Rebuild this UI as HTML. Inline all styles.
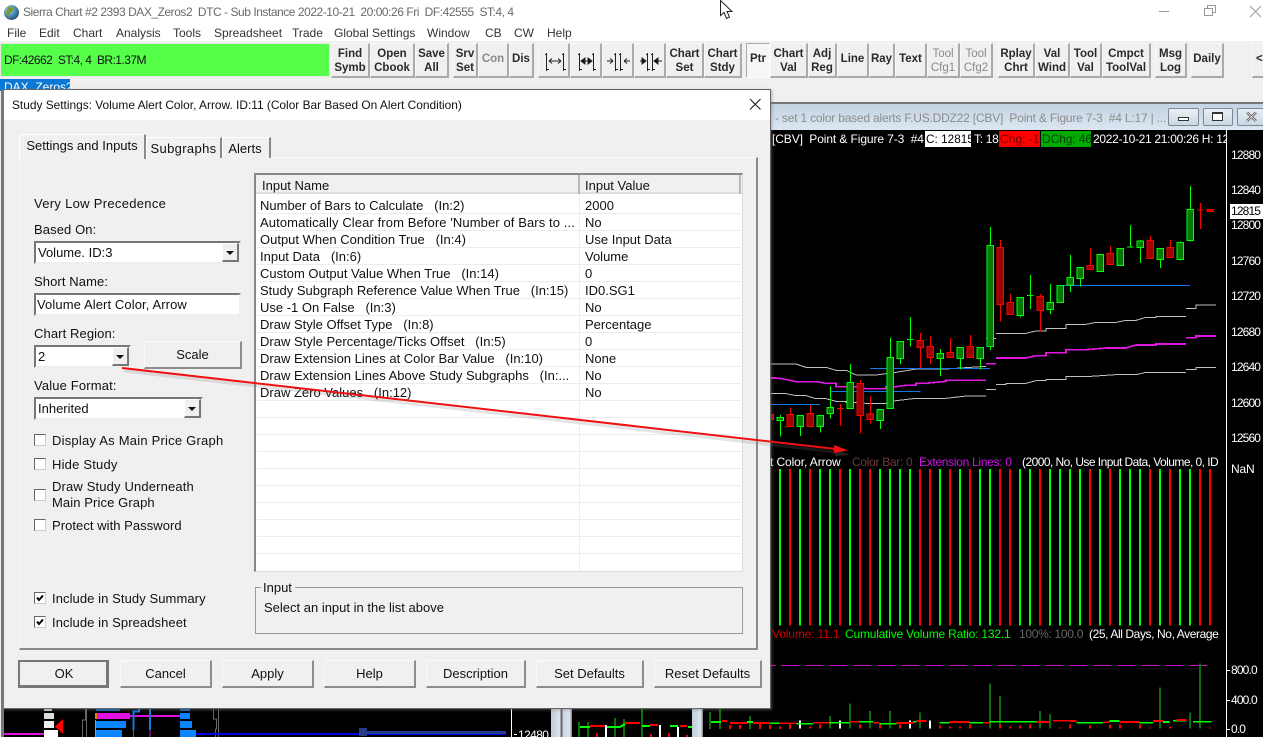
<!DOCTYPE html>
<html><head><meta charset="utf-8"><title>Sierra Chart</title>
<style>
*{box-sizing:border-box}
html,body{margin:0;padding:0;width:1263px;height:737px;overflow:hidden;background:#f0f0f0}
body{position:relative;font-family:"Liberation Sans",sans-serif;font-size:13px;color:#111}
.a{position:absolute}
.t{position:absolute;white-space:pre;line-height:16px;height:16px}
.b{position:absolute;top:43px;height:35px;background:#f0f0f0;border:1px solid #f8f8f8;border-right:2px solid #aaa;border-bottom:2px solid #aaa;text-align:center;font-size:11.5px;font-weight:bold;line-height:14px;color:#2a2a2a;padding-top:3px;white-space:pre;overflow:hidden}
.b.s{line-height:31px;padding-top:0}
.b.d{color:#8a8a8a;font-weight:normal}
.m{position:absolute;top:25px;line-height:16px;font-size:12px;color:#333;white-space:pre}
.dlgb{position:absolute;top:660px;height:28px;background:#f0f0f0;border:1px solid #fafafa;border-right:2px solid #8c8c8c;border-bottom:2px solid #8c8c8c;text-align:center;line-height:26px;font-size:13px;color:#111}
.combo{position:absolute;background:#fff;border:2px solid #777;border-right-color:#eee;border-bottom-color:#eee;line-height:20px;padding-left:2px;font-size:13px;white-space:pre}
.arr{position:absolute;right:0;top:0;bottom:0;width:17px;background:#f0f0f0;border-left:1px solid #fff;border-top:1px solid #fff;border-right:2px solid #777;border-bottom:2px solid #777}
.arr:after{content:"";position:absolute;left:3px;top:7px;border-left:4px solid transparent;border-right:4px solid transparent;border-top:4px solid #111}
.cb{position:absolute;left:34px;width:12px;height:12px;background:#fff;border:1px solid #777;border-top-color:#666;border-left-color:#666;border-right-color:#ccc;border-bottom-color:#ccc}
.tab{position:absolute;background:#f0f0f0;border:1px solid #fff;border-right:2px solid #888;border-bottom:0;text-align:center;font-size:13px}
.r{position:absolute;left:260px;white-space:pre;line-height:16px;font-size:13px}
.v{position:absolute;left:585px;white-space:pre;line-height:16px;font-size:13px}
.hl{position:absolute;left:257px;width:484px;height:1px;background:#ececec}
.c{position:absolute;white-space:pre;line-height:16px;font-size:12px;color:#fff}
.n{position:absolute;white-space:pre;line-height:16px;font-size:12px;color:#fff;left:1231px;letter-spacing:-.85px}
svg{position:absolute;overflow:visible}
</style></head><body>

<!-- top white -->
<div class="a" style="left:0;top:0;width:1263px;height:41px;background:#fff"></div>
<svg style="left:3px;top:4px" width="17" height="17" viewBox="0 0 17 17"><defs><radialGradient id="gl" cx=".35" cy=".3" r=".8"><stop offset="0" stop-color="#cfe6f7"/><stop offset=".5" stop-color="#4f8fb8"/><stop offset="1" stop-color="#1d4566"/></radialGradient></defs><circle cx="8.500" cy="8.500" r="7.500" fill="url(#gl)"/><path d="M5 3q4-1 6 1l-1 3-3 2-1 4-2-2-1-3z" fill="#7a9a3a"/></svg>
<div class="t" style="left:23px;top:4px;font-size:12px;letter-spacing:-.46px;color:#6a6a6a">Sierra Chart #2 2393 DAX_Zeros2  DTC - Sub Instance 2022-10-21  20:00:26 Fri  DF:42555  ST:4, 4</div>
<div class="m" style="left:7px">File</div><div class="m" style="left:39px">Edit</div><div class="m" style="left:73px">Chart</div><div class="m" style="left:116px">Analysis</div><div class="m" style="left:173px">Tools</div><div class="m" style="left:214px">Spreadsheet</div><div class="m" style="left:292px">Trade</div><div class="m" style="left:334px">Global Settings</div><div class="m" style="left:427px">Window</div><div class="m" style="left:485px">CB</div><div class="m" style="left:514px">CW</div><div class="m" style="left:547px">Help</div>

<!-- window controls -->
<svg style="left:1150px;top:0" width="113" height="24"><path d="M9 11.500H19" stroke="#999" fill="none"/><path d="M54.500 8.500H62.500V15.500H54.500ZM57.500 8.500V5.500H65.500V12.500H62.500" stroke="#999" fill="none"/><path d="M100 6L111 17M111 6L100 17" stroke="#999" fill="none"/></svg>
<svg style="left:720px;top:0" width="16" height="20"><path d="M.5 .5V15.500L4 12.500L6.500 18.500L9.500 17L7 11.500H12Z" fill="#fff" stroke="#222"/></svg>

<!-- toolbar -->
<div class="a" style="left:0;top:43px;width:330px;height:34px;background:#55ff4a;border:1px solid #e8e8e8"></div>
<div class="t" style="left:4px;top:52px;font-size:12px;letter-spacing:-.55px;color:#111">DF:42662  ST:4, 4  BR:1.37M</div>
<div class="b" style="left:331px;width:39px">Find
Symb</div>
<div class="b" style="left:370px;width:45px">Open
Cbook</div>
<div class="b" style="left:415px;width:34px">Save
All</div>
<div class="b" style="left:453px;width:25px">Srv
Set</div>
<div class="b s d" style="left:478px;width:31px;font-weight:bold">Con</div>
<div class="b s" style="left:509px;width:25px">Dis</div>
<div class="b" style="left:538px;width:32px"></div>
<div class="b" style="left:570px;width:32px"></div>
<div class="b" style="left:602px;width:32px"></div>
<div class="b" style="left:634px;width:32px"></div>
<svg style="left:538px;top:43px" width="128" height="35" fill="none" stroke="#222">
<path d="M8.500 10V28M7 11.500H8M9 26.500H11M25.500 10V28M24 11.500H25M26 26.500H28M11 18H23M11 18l3-2.500M11 18l3 2.500M23 18l-3-2.500M23 18l-3 2.500"/>
<path d="M41.500 10V28M40 11.500H41M42 26.500H44M55.500 10V28M54 11.500H55M56 26.500H58M44 18H53"/><path d="M43 18l4-3V21ZM54 18l-4-3V21Z" fill="#111"/>
<path d="M77.500 10V28M76 11.500H77M78 26.500H80M82.500 10V28M81 11.500H82M83 26.500H85M69 18H75M75 18l-3-2.500M75 18l-3 2.500M86 18H92M86 18l3-2.500M86 18l3 2.500"/>
<path d="M109.500 10V28M108 11.500H109M110 26.500H112M114.500 10V28M113 11.500H114M115 26.500H117M102 18H105M120 18H124"/><path d="M108 18l-4-3V21ZM116 18l4-3V21Z" fill="#111"/>
</svg>
<div class="b" style="left:666px;width:38px">Chart
Set</div>
<div class="b" style="left:704px;width:38px">Chart
Stdy</div>
<div class="b s" style="left:746px;width:24px;background:#f6f6f6;border:1px solid #aaa;border-right-color:#fff;border-bottom-color:#fff">Ptr</div>
<div class="b" style="left:770px;width:38px">Chart
Val</div>
<div class="b" style="left:808px;width:29px">Adj
Reg</div>
<div class="b s" style="left:837px;width:32px">Line</div>
<div class="b s" style="left:869px;width:26px">Ray</div>
<div class="b s" style="left:895px;width:32px">Text</div>
<div class="b d" style="left:927px;width:33px">Tool
Cfg1</div>
<div class="b d" style="left:960px;width:33px">Tool
Cfg2</div>
<div class="b" style="left:998px;width:37px">Rplay
Chrt</div>
<div class="b" style="left:1035px;width:35px">Val
Wind</div>
<div class="b" style="left:1070px;width:32px">Tool
Val</div>
<div class="b" style="left:1102px;width:49px">Cmpct
ToolVal</div>
<div class="b" style="left:1155px;width:32px">Msg
Log</div>
<div class="b s" style="left:1191px;width:33px">Daily</div>
<div class="b s" style="left:1252px;width:20px;text-align:left;padding-left:3px;border-right:0">&lt;</div>

<!-- chart tab behind dialog -->
<div class="a" style="left:0;top:79px;width:70px;height:12px;background:#0a78d4;color:#fff;font-size:12px;padding-left:4px;line-height:17px;overflow:hidden">DAX_Zeros2</div>

<!-- chart window title -->
<div class="a" style="left:770px;top:102px;width:493px;height:28px;background:linear-gradient(#c4d2e2,#dbe6f1);border-top:2px solid #777"></div>
<div class="t" style="left:775px;top:110px;font-size:12px;letter-spacing:-.2px;color:#8c8c8c">- set 1 color based alerts F.US.DDZ22 [CBV]  Point &amp; Figure 7-3  #4 L:17 | ...</div>
<div class="a" style="left:1168px;top:108px;width:31px;height:18px;background:linear-gradient(#e9eff6,#ccd7e3);border:1px solid #7d8896;border-radius:2px"></div>
<div class="a" style="left:1178px;top:117px;width:11px;height:4px;border:1px solid #333;background:#fff"></div>
<div class="a" style="left:1203px;top:108px;width:30px;height:18px;background:linear-gradient(#e9eff6,#ccd7e3);border:1px solid #7d8896;border-radius:2px"></div>
<div class="a" style="left:1212px;top:112px;width:11px;height:9px;border:1px solid #333;border-top-width:2px;background:#fff"></div>
<div class="a" style="left:1237px;top:108px;width:30px;height:18px;background:linear-gradient(#e9eff6,#ccd7e3);border:1px solid #7d8896;border-radius:2px"></div>
<svg style="left:1245px;top:111px" width="14" height="12"><path d="M2 1.500L11 10M11 1.500L2 10" stroke="#555" stroke-width="2.500" fill="none"/><path d="M2 1.500L11 10M11 1.500L2 10" stroke="#fff" stroke-width=".8" fill="none"/></svg>

<!-- black chart regions -->
<div class="a" style="left:770px;top:130px;width:493px;height:607px;background:#000"></div>
<div class="a" style="left:1226px;top:130px;width:1px;height:607px;background:#fff"></div>
<div class="a" style="left:1px;top:705px;width:3px;height:32px;background:#777"></div>
<div class="a" style="left:4px;top:705px;width:547px;height:32px;background:#000"></div>
<div class="a" style="left:551px;top:705px;width:21px;height:32px;background:linear-gradient(90deg,#c0ccd8,#dde6ee 45%,#666 45%,#666 54%,#c8d4e0 54%,#dde6ee 92%,#999 92%)"></div>
<div class="a" style="left:572px;top:705px;width:120px;height:32px;background:#000"></div>
<div class="a" style="left:692px;top:705px;width:11px;height:32px;background:linear-gradient(90deg,#c0ccd8,#dde6ee 85%,#999 85%)"></div>
<div class="a" style="left:703px;top:705px;width:67px;height:32px;background:#000"></div>

<!-- chart header -->
<div class="a" style="left:925px;top:131px;width:46px;height:16px;background:#fff"></div>
<div class="a" style="left:999px;top:131px;width:41px;height:16px;background:#f00"></div>
<div class="a" style="left:1041px;top:131px;width:50px;height:16px;background:#0a0"></div>
<div class="c" style="left:772px;top:131px;letter-spacing:-.1px">[CBV]  Point &amp; Figure 7-3  #4</div>
<div class="c" style="left:926px;top:131px;color:#000;font-size:11.800px">C: 12815</div>
<div class="c" style="left:974px;top:131px;letter-spacing:-.3px">T: 18</div>
<div class="c" style="left:1000px;top:131px;color:#700">Chg: -1</div>
<div class="c" style="left:1042px;top:131px;color:#040;letter-spacing:-.1px">DChg: 46</div>
<div class="c" style="left:1093px;top:131px;width:133px;overflow:hidden;letter-spacing:-.3px">2022-10-21 21:00:26 H: 12</div>

<!-- axis labels -->
<div class="n" style="top:147px">12880</div>
<div class="n" style="top:182px">12840</div>
<div class="n" style="top:217px">12800</div>
<div class="a" style="left:1230px;top:204px;width:33px;height:15px;background:#fff"></div>
<div class="n" style="top:203px;color:#000">12815</div>
<div class="n" style="top:253px">12760</div>
<div class="n" style="top:288px">12720</div>
<div class="n" style="top:324px">12680</div>
<div class="n" style="top:359px">12640</div>
<div class="n" style="top:395px">12600</div>
<div class="n" style="top:430px">12560</div>
<div class="c" style="left:1231px;top:461px;letter-spacing:-.2px">NaN</div>
<div class="n" style="top:662px">800.0</div>
<div class="n" style="top:692px">400.0</div>
<div class="n" style="top:721px">0.0</div>
<svg style="left:1226px;top:660px" width="6" height="75"><path d="M0 10.500H4M0 40.500H4M0 69.500H4" stroke="#fff" fill="none"/></svg>

<!-- price chart -->
<svg style="left:0;top:0" width="1263" height="737">
<g transform="translate(770,130) scale(.33333)" fill="none" shape-rendering="crispEdges">
<g stroke="#c0c0c0" stroke-width="3">
<path d="M0 702H78L108 712H168L198 721H228L258 735H318L378 727L408 722L438 717H528L648 709M648 625H678M678 610H768L798 603H828V595H888V583H948L978 577H1038L1068 571H1098L1128 562H1158V559H1248M1248 535H1278V525H1338"/>
<path d="M0 791H48L78 797H108L138 806H168L198 814H228V818H258L288 820H348L378 812L438 805H528L588 798H648M648 778H678M678 763H708V760H768L798 752H828V748H888V740H948L1038 734H1098L1128 727H1248M1248 718H1278V712H1338"/>
</g>
<g stroke="#e018e0" stroke-width="5">
<path d="M0 744H18L48 748L78 755H138L168 760H198V770H258L288 776H348V770H378L408 766H438V760H468L528 754V751H648M648 701H678M678 684H768L798 677H828V668H888V659H948L1008 654H1068L1098 645H1158V642H1248M1248 623H1278V618H1338"/>
</g>
<path d="M0 823H150M180 785H450V787M300 715H660M870 466H1260" stroke="#1478e6" stroke-width="3"/>
<path stroke="#0f0" stroke-width="3" d="M31 855V920M91 855V918M151 855V908M181 768V866M241 702V836M331 838V897M361 622V836M391 634V702M421 561V650M511 657V738M571 652V719M631 652V719M661 291V660M751 502V563M781 435V537M841 462V552M871 466V518M901 375V486M931 412V470M991 373V425M1051 355V407M1081 285V353M1111 330V399M1171 355V414M1231 335V392M1261 168V335M411 629H431M771 497H791M1071 351H1091"/>
<path stroke="#f00" stroke-width="3" d="M61 832V890M121 825V890M211 822V888M271 750V910M301 800V880M451 609V714M481 618V702M541 624V683M601 615V683M691 330V575M721 492V554M811 492V605M961 354V419M1021 348V404M1141 318V386M1201 330V383M1291 219V297M201 836H221M1281 240H1301"/>
<path fill="#007a00" stroke="#0f0" stroke-width="3" d="M21 862H41V872H21ZM81 856H101V890H81ZM141 856H161V890H141ZM171 832H191V851H171ZM231 757H251V836H231ZM321 838H341V872H321ZM351 682H371V836H351ZM381 634H401V686H381ZM501 670H521V686H501ZM561 652H581V686H561ZM621 652H641V686H621ZM651 346H671V650H651ZM741 502H761V557H741ZM831 517H851V539H831ZM861 466H881V518H861ZM891 442H911V465H891ZM921 412H941V445H921ZM981 373H1001V425H981ZM1041 355H1061V407H1041ZM1101 333H1121V353H1101ZM1161 355H1181V388H1161ZM1221 337H1241V389H1221ZM1251 238H1271V332H1251Z"/>
<path fill="#a00000" stroke="#f00" stroke-width="3" d="M-9 853H11V869H-9ZM51 853H71V890H51ZM111 850H131V890H111ZM261 760H281V857H261ZM291 852H311V869H291ZM441 631H461V652H441ZM471 649H491V683H471ZM531 667H551V683H531ZM591 649H611V683H591ZM681 352H701V523H681ZM711 517H731V554H711ZM801 499H821V542H801ZM951 406H971V419H951ZM1011 370H1031V404H1011ZM1131 331H1151V386H1131ZM1191 352H1211V383H1191ZM1311 238H1331V244H1311Z"/>
</g>
<!-- color bars -->
<g transform="translate(769.67,450) scale(.33333)" fill="none" shape-rendering="crispEdges">
<path stroke="#0f0" stroke-width="6" d="M31 57V527M91 57V527M151 57V527M181 57V527M241 57V527M331 57V527M361 57V527M391 57V527M421 57V527M511 57V527M571 57V527M631 57V527M661 57V527M751 57V527M781 57V527M841 57V527M871 57V527M901 57V527M931 57V527M991 57V527M1051 57V527M1081 57V527M1111 57V527M1171 57V527M1231 57V527M1261 57V527"/>
<path stroke="#f00" stroke-width="6" d="M1 57V527M61 57V527M121 57V527M211 57V527M271 57V527M301 57V527M451 57V527M481 57V527M541 57V527M601 57V527M691 57V527M721 57V527M811 57V527M961 57V527M1021 57V527M1141 57V527M1201 57V527M1291 57V527M1321 57V527"/>
<!-- volume -->
<path stroke="#d010d0" stroke-width="3" d="M0 646H18M35 646H90M107 646H162M179 646H234M251 646H306M323 646H378M395 646H450M467 646H522M539 646H594M611 646H666M683 646H738M755 646H810M827 646H882M899 646H954M971 646H1026M1043 646H1098M1115 646H1170M1187 646H1242M1259 646H1314"/>
<path stroke="#0a6e0a" stroke-width="6" d="M181 798V836M241 760V836M301 783V836M361 783V836M451 787V836M661 700V836M691 738V836M811 783V836M841 792V836M1171 712V836M1261 787V836M1291 640V836"/>
<path stroke="#fff" stroke-width="6" d="M91 812V836M211 812V836M421 812V836M481 812V836"/>
<path stroke="#f00" stroke-width="6" d="M31 830V836M61 824V836M121 830V836M151 824V836M271 824V836M331 824V836M391 824V836M511 826V836M541 830V836M571 830V836M601 824V836M691 824V836M721 830V836M751 826V836M781 824V836M871 832V836M901 824V836M961 826V836M1021 824V836M1051 824V836M1111 824V836M1141 832V836M1201 830V836M1321 832V836"/>
<path stroke="#0f0" stroke-width="5" d="M0 820H30M80 821H130M180 818H240M270 815H310M330 821H380M430 815H440M510 818H540M600 818H640M660 815H800M920 818H1000M1020 813H1050M1110 818H1150M1180 816H1200M1210 812H1250M1270 815H1325"/>
<path stroke="#f00" stroke-width="5" d="M30 820H80M130 818H180M240 815H270M310 818H330M380 819H430M440 813H470M540 816H600M640 818H660M800 816H840M850 812H900M900 813H920M1000 817H1020M1050 816H1110M1150 813H1180M1220 810H1250"/>
</g>
</svg>

<!-- legends -->
<div class="c" style="left:770px;top:454px;letter-spacing:-.1px">t Color, Arrow</div>
<div class="c" style="left:852px;top:454px;color:#6b3a3a;letter-spacing:-.3px">Color Bar: 0</div>
<div class="c" style="left:919px;top:454px;color:#d010e8;letter-spacing:-.3px">Extension Lines: 0</div>
<div class="c" style="left:1022px;top:454px;width:204px;overflow:hidden;letter-spacing:-.55px">(2000, No, Use Input Data, Volume, 0, ID</div>
<div class="c" style="left:772px;top:626px;color:#c00;letter-spacing:-.15px">Volume: 11.1</div>
<div class="c" style="left:845px;top:626px;color:#0f0;letter-spacing:-.2px">Cumulative Volume Ratio: 132.1</div>
<div class="c" style="left:1019px;top:626px;color:#666;letter-spacing:-.3px">100%: 100.0</div>
<div class="c" style="left:1089px;top:626px;width:137px;overflow:hidden;letter-spacing:-.4px">(25, All Days, No, Average</div>

<!-- bottom fragments -->
<svg style="left:0;top:0" width="1263" height="737" shape-rendering="crispEdges">
<rect x="4" y="733" width="40" height="2" fill="#e010e0"/>
<rect x="44" y="708" width="8" height="3" fill="#ccc"/><rect x="44" y="713" width="10" height="6" fill="#ddd"/><rect x="44" y="721" width="10" height="7" fill="#eee"/><rect x="44" y="730" width="14" height="7" fill="#fff"/>
<path d="M63 719V734L55 726.500Z" fill="#f00" shape-rendering="auto"/>
<path d="M85.500 708V720H82.500V737M86.500 708V737M213.500 708V719H216.500V729H215.500V737M218.500 708V737" stroke="#666" fill="none"/>
<path d="M95.500 720V737" stroke="#1ce" fill="none"/>
<rect x="95" y="713" width="2" height="6" fill="#d80"/>
<rect x="96" y="708" width="24" height="3" fill="#0a60b0"/><rect x="97" y="713" width="33" height="6" fill="#e010e0"/><rect x="130" y="715" width="50" height="2" fill="#e010e0"/><rect x="96" y="721" width="30" height="7" fill="#0a84ff"/><rect x="96" y="730" width="26" height="7" fill="#0a84ff"/>
<rect x="180" y="708" width="10" height="3" fill="#0a60b0"/><rect x="180" y="713" width="10" height="6" fill="#0a84ff"/><rect x="180" y="721" width="12" height="7" fill="#0a84ff"/><rect x="180" y="730" width="16" height="7" fill="#0a84ff"/>
<path d="M139 708V711.500H133.500V730M150 708V730" stroke="#1478d8" stroke-width="2" fill="none"/><path d="M133.500 730V737M150 730V737" stroke="#e010e0" fill="none"/>
<rect x="196" y="733" width="310" height="2" fill="#0000f0"/><rect x="359" y="728" width="8" height="8" fill="#283c8c"/><rect x="367" y="731" width="139" height="3" fill="#283c8c"/>
<path d="M511.500 708V737M514 734.500H517" stroke="#fff" fill="none"/>
<!-- mid chart -->
<path d="M579 722V737M588 722V737M615 718V737M624 719V737M642 708V737" stroke="#0a6e0a" stroke-width="2" fill="none"/>
<path d="M606 725V737M660 725V737M678 727V737" stroke="#fff" stroke-width="2" fill="none"/>
<path d="M597 733V737M651 734V737M669 733V737M687 735V737" stroke="#f00" stroke-width="2" fill="none"/>
<path d="M580 727H590M607 727H620L625 724M642 726H650M670 726H678M688 727H692" stroke="#0f0" stroke-width="2" fill="none"/>
<path d="M590 726H605M625 723H640M650 725H658M680 726H687" stroke="#f00" stroke-width="2" fill="none"/>
<!-- right chart -->
<path d="M710 712V729M720 708V729M750 716V729" stroke="#0a6e0a" stroke-width="2" fill="none"/>
<path d="M730 725V729M740 725V729M760 723V729M770 725V729M780 727V729M790 724V729" stroke="#f00" stroke-width="2" fill="none"/>
<path d="M711 722H721M747 722H753" stroke="#0f0" stroke-width="2" fill="none"/>
<path d="M722 721H727M730 723H747M753 723H770" stroke="#f00" stroke-width="2" fill="none"/>
</svg>
<div class="c" style="left:518px;top:727px;letter-spacing:-.6px">12480</div>

<!-- dialog -->
<div class="a" style="left:3px;top:89px;width:768px;height:620px;background:#f0f0f0;border:1px solid #666;border-left-width:1px;box-shadow:1px 1px 3px rgba(120,120,120,.5)"></div>
<div class="a" style="left:1px;top:90px;width:3px;height:620px;background:#777"></div>
<div class="a" style="left:4px;top:90px;width:766px;height:30px;background:#fff"></div>
<div class="t" style="left:12px;top:97px;font-size:11.900px">Study Settings: Volume Alert Color, Arrow. ID:11 (Color Bar Based On Alert Condition)</div>
<svg style="left:749px;top:98px" width="13" height="13"><path d="M1 1L11.500 11.500M11.500 1L1 11.500" stroke="#111" fill="none"/></svg>

<!-- tab panel -->
<div class="a" style="left:19px;top:157px;width:739px;height:493px;border:1px solid #fafafa;border-right:2px solid #8a8a8a;border-bottom:2px solid #8a8a8a"></div>
<div class="tab" style="left:146px;top:137px;width:76px;height:21px;line-height:21px;letter-spacing:.35px">Subgraphs</div>
<div class="tab" style="left:222px;top:137px;width:49px;height:21px;line-height:21px;padding-right:2px">Alerts</div>
<div class="tab" style="left:19px;top:134px;width:127px;height:25px;line-height:22px">Settings and Inputs</div>

<!-- left controls -->
<div class="t" style="left:34px;top:196px;letter-spacing:.3px">Very Low Precedence</div>
<div class="t" style="left:34px;top:222px;letter-spacing:.1px">Based On:</div>
<div class="combo" style="left:34px;top:241px;width:207px;height:23px">Volume. ID:3<div class="arr"></div></div>
<div class="t" style="left:34px;top:274px;letter-spacing:.1px">Short Name:</div>
<div class="combo" style="left:34px;top:293px;width:207px;height:23px;padding-left:1px;letter-spacing:.1px">Volume Alert Color, Arrow</div>
<div class="t" style="left:34px;top:326px;letter-spacing:.1px">Chart Region:</div>
<div class="combo" style="left:34px;top:345px;width:97px;height:23px">2<div class="arr"></div></div>
<div class="dlgb" style="left:144px;top:341px;width:98px;height:28px">Scale</div>
<div class="t" style="left:34px;top:378px;letter-spacing:.15px">Value Format:</div>
<div class="combo" style="left:34px;top:397px;width:169px;height:23px">Inherited<div class="arr"></div></div>

<div class="cb" style="top:434px"></div><div class="t" style="left:52px;top:433px;letter-spacing:.22px">Display As Main Price Graph</div>
<div class="cb" style="top:458px"></div><div class="t" style="left:52px;top:457px;letter-spacing:.2px">Hide Study</div>
<div class="cb" style="top:489px"></div><div class="t" style="left:52px;top:479px;letter-spacing:.15px">Draw Study Underneath</div><div class="t" style="left:52px;top:495px;letter-spacing:.1px">Main Price Graph</div>
<div class="cb" style="top:519px"></div><div class="t" style="left:52px;top:518px;letter-spacing:.05px">Protect with Password</div>
<div class="cb" style="top:592px"></div><div class="t" style="left:52px;top:591px;letter-spacing:.08px">Include in Study Summary</div>
<div class="cb" style="top:616px"></div><div class="t" style="left:52px;top:615px;letter-spacing:.08px">Include in Spreadsheet</div>
<svg style="left:34px;top:592px" width="12" height="36" fill="none" stroke="#000" stroke-width="2"><path d="M3 5.500L5 8L9 3.500"/><path d="M3 29.500L5 32L9 27.500"/></svg>

<!-- list -->
<div class="a" style="left:254px;top:173px;width:489px;height:399px;background:#fff;border:2px solid #888;border-right:1px solid #ddd;border-bottom:1px solid #ddd"></div>
<div class="a" style="left:256px;top:175px;width:486px;height:19px;background:#f0f0f0;border-bottom:2px solid #ddd"></div>
<div class="a" style="left:578px;top:175px;width:2px;height:19px;background:#bbb"></div>
<div class="a" style="left:739px;top:175px;width:2px;height:19px;background:#bbb"></div>
<div class="t" style="left:262px;top:178px">Input Name</div>
<div class="t" style="left:585px;top:178px">Input Value</div>
<div class="a" style="left:579px;top:194px;width:1px;height:377px;background:#ececec"></div>
<div class="hl" style="top:213px"></div><div class="hl" style="top:230px"></div><div class="hl" style="top:247px"></div><div class="hl" style="top:264px"></div><div class="hl" style="top:281px"></div><div class="hl" style="top:298px"></div><div class="hl" style="top:315px"></div><div class="hl" style="top:332px"></div><div class="hl" style="top:349px"></div><div class="hl" style="top:366px"></div><div class="hl" style="top:383px"></div><div class="hl" style="top:400px"></div><div class="hl" style="top:417px"></div><div class="hl" style="top:434px"></div><div class="hl" style="top:451px"></div><div class="hl" style="top:468px"></div><div class="hl" style="top:485px"></div><div class="hl" style="top:502px"></div><div class="hl" style="top:519px"></div><div class="hl" style="top:536px"></div><div class="hl" style="top:553px"></div>

<div class="r" style="top:198px">Number of Bars to Calculate   (In:2)</div><div class="v" style="top:198px">2000</div>
<div class="r" style="top:215px;letter-spacing:.1px">Automatically Clear from Before 'Number of Bars to ...</div><div class="v" style="top:215px">No</div>
<div class="r" style="top:232px">Output When Condition True   (In:4)</div><div class="v" style="top:232px">Use Input Data</div>
<div class="r" style="top:249px">Input Data   (In:6)</div><div class="v" style="top:249px">Volume</div>
<div class="r" style="top:266px">Custom Output Value When True   (In:14)</div><div class="v" style="top:266px">0</div>
<div class="r" style="top:283px">Study Subgraph Reference Value When True   (In:15)</div><div class="v" style="top:283px">ID0.SG1</div>
<div class="r" style="top:300px">Use -1 On False   (In:3)</div><div class="v" style="top:300px">No</div>
<div class="r" style="top:317px">Draw Style Offset Type   (In:8)</div><div class="v" style="top:317px">Percentage</div>
<div class="r" style="top:334px">Draw Style Percentage/Ticks Offset   (In:5)</div><div class="v" style="top:334px">0</div>
<div class="r" style="top:351px">Draw Extension Lines at Color Bar Value   (In:10)</div><div class="v" style="top:351px">None</div>
<div class="r" style="top:368px">Draw Extension Lines Above Study Subgraphs   (In:...</div><div class="v" style="top:368px">No</div>
<div class="r" style="top:385px">Draw Zero Values   (In:12)</div><div class="v" style="top:385px">No</div>

<!-- group box -->
<div class="a" style="left:255px;top:587px;width:488px;height:47px;border:1px solid #999"></div>
<div class="t" style="left:261px;top:580px;background:#f0f0f0;padding:0 3px 0 2px">Input</div>
<div class="t" style="left:264px;top:600px">Select an input in the list above</div>

<!-- buttons -->
<div class="dlgb" style="left:18px;width:91px;border:2px solid #777;border-bottom-width:3px;border-right-width:3px;line-height:23px;padding-left:2px">OK</div>
<div class="dlgb" style="left:120px;width:92px">Cancel</div>
<div class="dlgb" style="left:222px;width:92px">Apply</div>
<div class="dlgb" style="left:324px;width:92px">Help</div>
<div class="dlgb" style="left:426px;width:100px">Description</div>
<div class="dlgb" style="left:536px;width:108px">Set Defaults</div>
<div class="dlgb" style="left:654px;width:108px">Reset Defaults</div>

<!-- red arrow -->
<svg style="left:0;top:0" width="1263" height="737">
<path d="M124 371L836 452" stroke="#777" stroke-opacity=".2" stroke-width="3" fill="none"/>
<path d="M850 455L835 449V456Z" fill="#777" fill-opacity=".3"/>
<path d="M122 368L836 449" stroke="#f01010" stroke-width="2" fill="none"/>
<path d="M848 450.500L834 445V453Z" fill="#f01010"/>
</svg>
</body></html>
